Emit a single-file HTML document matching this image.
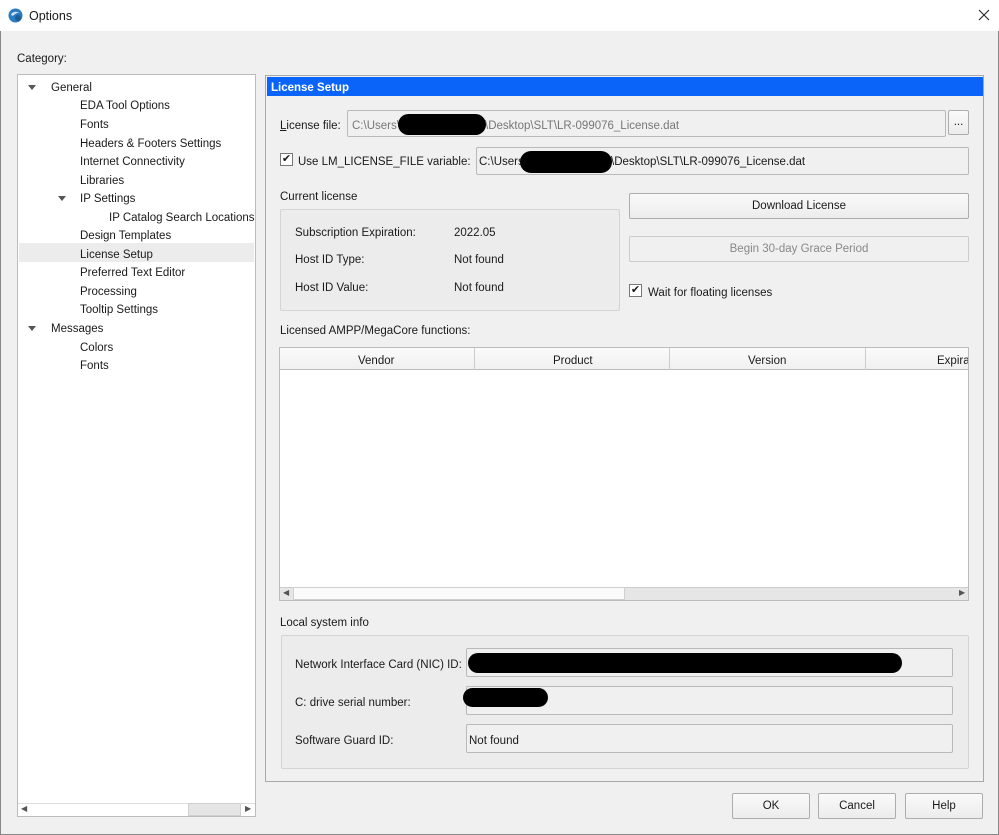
<!DOCTYPE html>
<html><head><meta charset="utf-8"><style>
*{margin:0;padding:0;box-sizing:border-box}
body{width:999px;height:835px;background:#f0f0f0;font-family:"Liberation Sans","DejaVu Sans",sans-serif;font-size:11.5px;color:#1a1a1a;position:relative;overflow:hidden}
.a{position:absolute;white-space:nowrap}
.t{position:absolute;white-space:nowrap;line-height:14px;margin-top:1px}
.box{position:absolute;border:1px solid #b9b9b9;border-radius:2px}
.btn{position:absolute;border:1px solid #adadad;border-radius:2px;background:linear-gradient(#fafafa,#ececec);text-align:center}
.blob{position:absolute;background:#000;border-radius:14px}
.tri{position:absolute;width:0;height:0;border-left:4px solid transparent;border-right:4px solid transparent;border-top:5px solid #555}
</style></head><body>
<div class="a" style="left:0;top:0;width:999px;height:31px;background:#fff"></div>
<div class="a" style="left:0;top:31px;width:1px;height:804px;background:#888"></div>
<div class="a" style="left:998px;top:31px;width:1px;height:804px;background:#888"></div>
<div class="a" style="left:0;top:834px;width:999px;height:1px;background:#888"></div>
<svg class="a" style="left:8px;top:8px" width="15" height="15" viewBox="0 0 15 15"><circle cx="7.5" cy="7.5" r="7" fill="#2a7bbf"/><path d="M3 6 Q7 2 12 5 Q9 4 6 7 Q4 9 3 6Z" fill="#cde6f7"/><circle cx="10" cy="10" r="3" fill="#1b5d95"/></svg>
<div class="t" style="left:29px;top:8px;font-size:12.5px">Options</div>
<svg class="a" style="left:978px;top:9px" width="12" height="12"><path d="M1 1L11 11M11 1L1 11" stroke="#222" stroke-width="1.1"/></svg>

<div class="t" style="left:17px;top:51px">Category:</div>
<div class="a" style="left:17px;top:74px;width:239px;height:743px;background:#fff;border:1px solid #bcbcbc"></div>
<div class="a" style="left:19px;top:243px;width:235px;height:19px;background:#ececec"></div>
<div class="tri" style="left:28px;top:85px"></div>
<div class="tri" style="left:58px;top:196px"></div>
<div class="tri" style="left:28px;top:326px"></div>
<div class="t" style="left:51px;top:80px">General</div>
<div class="t" style="left:80px;top:98px">EDA Tool Options</div>
<div class="t" style="left:80px;top:117px">Fonts</div>
<div class="t" style="left:80px;top:136px">Headers &amp; Footers Settings</div>
<div class="t" style="left:80px;top:154px">Internet Connectivity</div>
<div class="t" style="left:80px;top:173px">Libraries</div>
<div class="t" style="left:80px;top:191px">IP Settings</div>
<div class="t" style="left:109px;top:210px">IP Catalog Search Locations</div>
<div class="t" style="left:80px;top:228px">Design Templates</div>
<div class="t" style="left:80px;top:247px">License Setup</div>
<div class="t" style="left:80px;top:265px">Preferred Text Editor</div>
<div class="t" style="left:80px;top:284px">Processing</div>
<div class="t" style="left:80px;top:302px">Tooltip Settings</div>
<div class="t" style="left:51px;top:321px">Messages</div>
<div class="t" style="left:80px;top:340px">Colors</div>
<div class="t" style="left:80px;top:358px">Fonts</div>
<div class="a" style="left:18px;top:803px;width:237px;height:13px;background:#fff;border-top:1px solid #ddd"></div>
<div class="a" style="left:188px;top:803px;width:53px;height:13px;background:#e5e5e5;border:1px solid #d0d0d0"></div>
<div class="t" style="left:21px;top:801px;font-size:8px;color:#555">◀</div>
<div class="t" style="left:245px;top:801px;font-size:8px;color:#555">▶</div>

<div class="a" style="left:265px;top:75px;width:719px;height:707px;border:1px solid #a9a9a9"></div>
<div class="a" style="left:267px;top:77px;width:716px;height:19px;background:#0a64fa"></div>
<div class="t" style="left:271px;top:80px;color:#fff;font-weight:bold;font-size:11.5px">License Setup</div>

<div class="t" style="left:280px;top:118px"><u>L</u>icense file:</div>
<div class="box" style="left:347px;top:110px;width:599px;height:27px"></div>
<div class="t" style="left:352px;top:118px;color:#777">C:\Users\</div>
<div class="blob" style="left:398px;top:114px;width:88px;height:21px"></div>
<div class="t" style="left:485px;top:118px;color:#777">\Desktop\SLT\LR-099076_License.dat</div>
<div class="btn" style="left:948px;top:110px;width:21px;height:25px;line-height:22px">...</div>

<div class="a" style="left:280px;top:153px;width:13px;height:13px;border:1px solid #777;background:#fff;font-size:11px;line-height:11px;text-align:center">✔</div>
<div class="t" style="left:298px;top:154px">Use LM_LICENSE_FILE variable:</div>
<div class="box" style="left:476px;top:147px;width:493px;height:28px"></div>
<div class="t" style="left:479px;top:154px">C:\Users\</div>
<div class="blob" style="left:520px;top:151px;width:92px;height:22px"></div>
<div class="t" style="left:611px;top:154px">\Desktop\SLT\LR-099076_License.dat</div>

<div class="t" style="left:280px;top:189px">Current license</div>
<div class="box" style="left:280px;top:209px;width:340px;height:102px;border-color:#d4d4d4;background:#ececec"></div>
<div class="t" style="left:295px;top:225px">Subscription Expiration:</div><div class="t" style="left:454px;top:225px">2022.05</div>
<div class="t" style="left:295px;top:252px">Host ID Type:</div><div class="t" style="left:454px;top:252px">Not found</div>
<div class="t" style="left:295px;top:280px">Host ID Value:</div><div class="t" style="left:454px;top:280px">Not found</div>

<div class="btn" style="left:629px;top:193px;width:340px;height:26px;line-height:24px">Download License</div>
<div class="btn" style="left:629px;top:236px;width:340px;height:26px;line-height:24px;color:#888;background:#f0f0f0;border-color:#ccc">Begin 30-day Grace Period</div>
<div class="a" style="left:629px;top:284px;width:13px;height:13px;border:1px solid #777;background:#fff;font-size:11px;line-height:11px;text-align:center">✔</div>
<div class="t" style="left:648px;top:285px">Wait for floating licenses</div>

<div class="t" style="left:280px;top:323px">Licensed AMPP/MegaCore functions:</div>
<div class="a" style="left:279px;top:347px;width:690px;height:254px;background:#fff;border:1px solid #bcbcbc"></div>
<div class="a" style="left:280px;top:348px;width:688px;height:22px;background:linear-gradient(#fbfbfb,#f0f0f0);border-bottom:1px solid #bbb"></div>
<div class="a" style="left:474px;top:348px;width:1px;height:22px;background:#ccc"></div>
<div class="a" style="left:669px;top:348px;width:1px;height:22px;background:#ccc"></div>
<div class="a" style="left:865px;top:348px;width:1px;height:22px;background:#ccc"></div>
<div class="t" style="left:358px;top:353px">Vendor</div>
<div class="t" style="left:553px;top:353px">Product</div>
<div class="t" style="left:748px;top:353px">Version</div>
<div class="t" style="left:937px;top:353px;width:31px;overflow:hidden">Expiration</div>
<div class="a" style="left:280px;top:587px;width:688px;height:13px;background:#e6e6e6;border-top:1px solid #ccc"></div>
<div class="a" style="left:293px;top:587px;width:332px;height:13px;background:#fafafa;border:1px solid #d0d0d0"></div>
<div class="t" style="left:283px;top:585px;font-size:8px;color:#555">◀</div>
<div class="t" style="left:959px;top:585px;font-size:8px;color:#555">▶</div>

<div class="t" style="left:280px;top:615px">Local system info</div>
<div class="box" style="left:281px;top:635px;width:688px;height:134px;border-color:#d4d4d4;background:#ececec"></div>
<div class="t" style="left:295px;top:657px">Network Interface Card (NIC) ID:</div>
<div class="box" style="left:466px;top:648px;width:487px;height:29px;background:#f0f0f0"></div>
<div class="blob" style="left:468px;top:653px;width:434px;height:20px"></div>
<div class="t" style="left:295px;top:695px">C: drive serial number:</div>
<div class="box" style="left:466px;top:686px;width:487px;height:29px;background:#f0f0f0"></div>
<div class="blob" style="left:463px;top:688px;width:85px;height:19px"></div>
<div class="t" style="left:295px;top:733px">Software Guard ID:</div>
<div class="box" style="left:466px;top:724px;width:487px;height:29px;background:#f0f0f0"></div>
<div class="t" style="left:469px;top:733px">Not found</div>

<div class="btn" style="left:732px;top:793px;width:78px;height:26px;line-height:24px">OK</div>
<div class="btn" style="left:818px;top:793px;width:78px;height:26px;line-height:24px">Cancel</div>
<div class="btn" style="left:905px;top:793px;width:78px;height:26px;line-height:24px">Help</div>
</body></html>
